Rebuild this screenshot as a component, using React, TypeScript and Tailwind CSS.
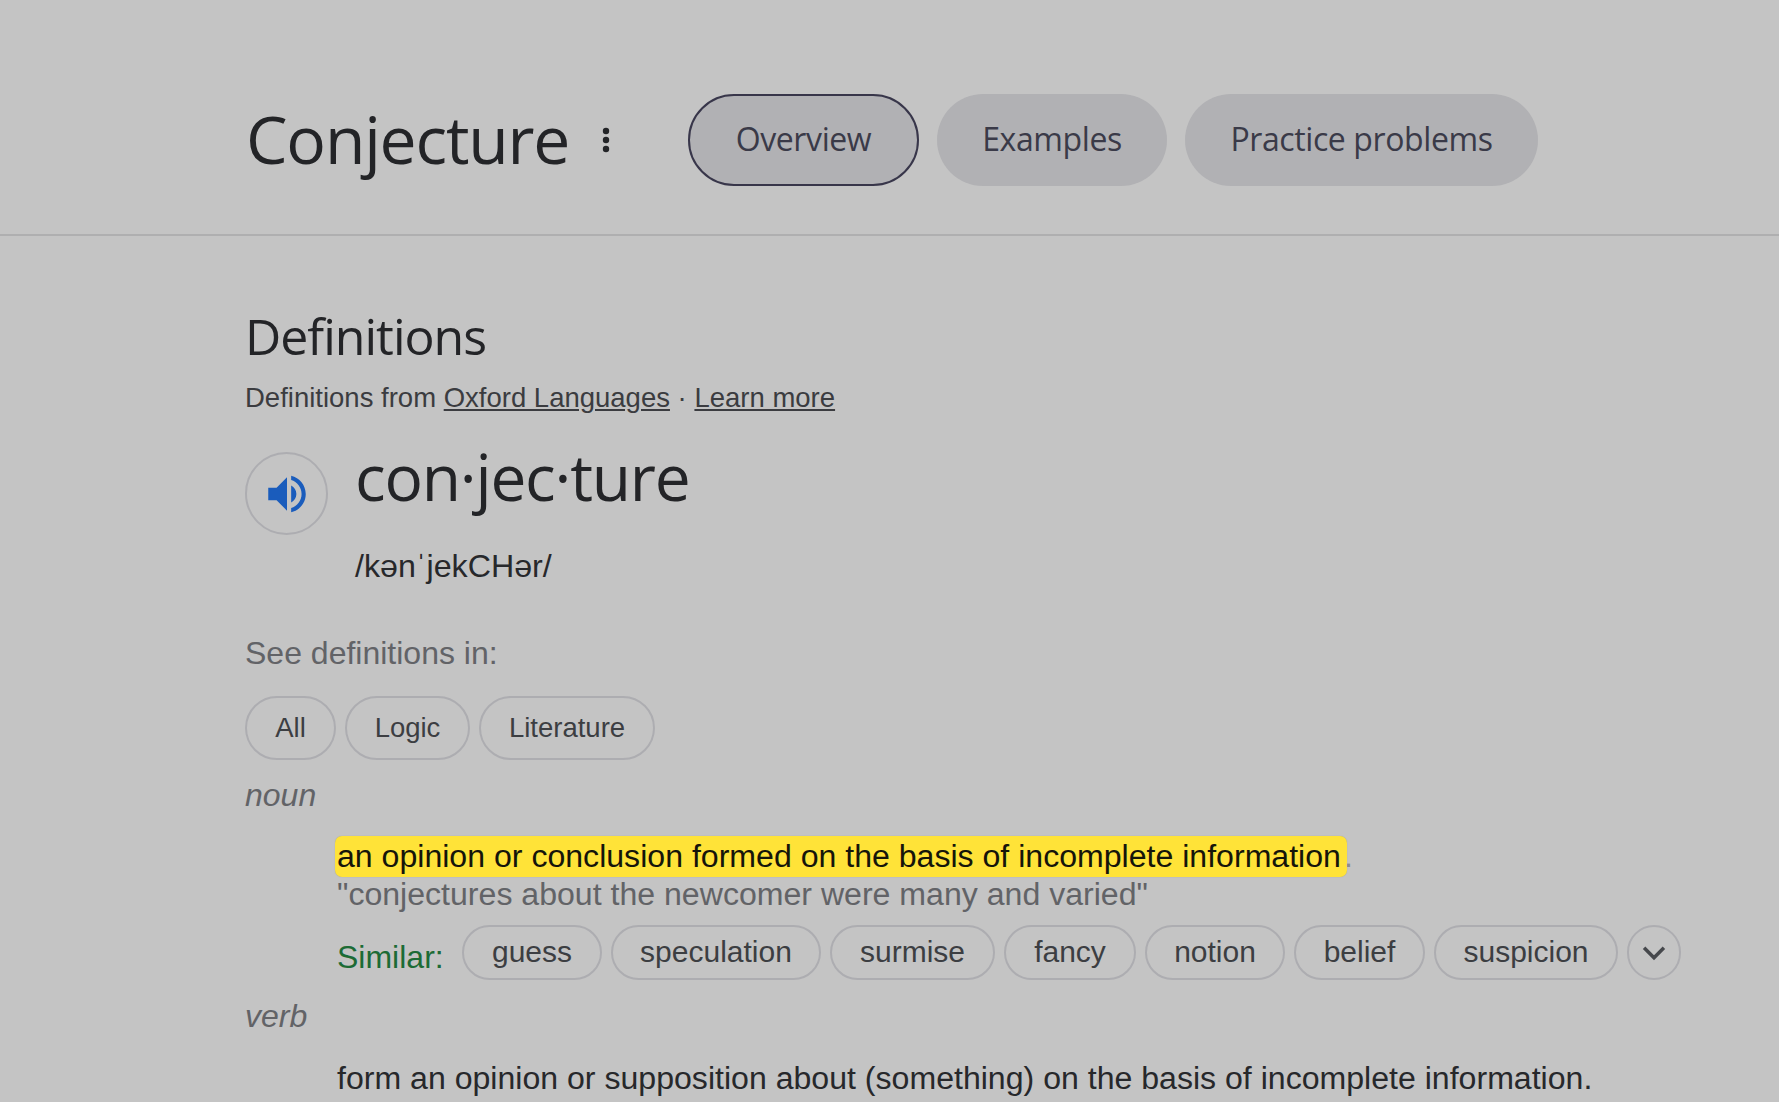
import React from "react";

const chipClass =
  "flex items-center justify-center rounded-full border-2 border-[#adadb1] text-[#3c3e42]";

const similar = [
  { t: "guess", w: "w-[140px]" },
  { t: "speculation", w: "w-[210px]" },
  { t: "surmise", w: "w-[165px]" },
  { t: "fancy", w: "w-[132px]" },
  { t: "notion", w: "w-[140px]" },
  { t: "belief", w: "w-[131px]" },
  { t: "suspicion", w: "w-[184px]" },
];

export default function App() {
  return (
    <div className="h-[1102px] w-[1779px] overflow-hidden bg-[#c4c4c4] font-['Liberation_Sans',Arial,sans-serif] text-[#202124]">
      <header className="flex h-[236px] items-start border-b-2 border-[#afafb0] pl-[246px] pt-[94px]">
        <h1 className="flex h-[92px] w-[321px] items-center whitespace-nowrap pb-[4px] font-['Open_Sans',sans-serif] text-[66px] font-normal tracking-[-1.2px] text-[#232427]">
          Conjecture
        </h1>
        <svg className="ml-[35px] mt-[33px]" width="8" height="26" viewBox="0 0 8 26" fill="#232427">
          <circle cx="4" cy="4" r="3.2" />
          <circle cx="4" cy="13" r="3.2" />
          <circle cx="4" cy="22" r="3.2" />
        </svg>
        <nav className="ml-[78px] flex gap-[18px] font-['Open_Sans',sans-serif] text-[32px] tracking-[-0.4px] text-[#3a3a48]">
          <div className="flex h-[92px] w-[231px] items-center justify-center rounded-full border-2 border-[#38364a] bg-[#b1b1b4] pb-[3px]">
            Overview
          </div>
          <div className="flex h-[92px] w-[230px] items-center justify-center rounded-full bg-[#b1b1b4] pb-[3px]">
            Examples
          </div>
          <div className="flex h-[92px] w-[353px] items-center justify-center rounded-full bg-[#b1b1b4] pb-[3px]">
            Practice problems
          </div>
        </nav>
      </header>

      <main className="pl-[245px]">
        <h2 className="mt-[70px] h-[60px] font-['Open_Sans',sans-serif] text-[50px] font-normal leading-[60px] tracking-[-1px] text-[#232427]">
          Definitions
        </h2>
        <p className="mt-[15px] h-[34px] text-[27.5px] leading-[34px] text-[#3b3c40]">
          Definitions from <span className="underline">Oxford Languages</span> ·{" "}
          <span className="underline">Learn more</span>
        </p>

        <section className="mt-[22px] flex items-start">
          <div className="mt-[15px] flex h-[83px] w-[83px] items-center justify-center rounded-full border-2 border-[#adadb1]">
            <svg width="50" height="50" viewBox="0 0 24 24" fill="#1a5cbc">
              <path d="M3 9v6h4l5 5V4L7 9H3zm13.5 3c0-1.77-1.02-3.29-2.5-4.03v8.05c1.48-.73 2.5-2.25 2.5-4.02zM14 3.23v2.06c2.89.86 5 3.54 5 6.71s-2.11 5.85-5 6.71v2.06c4.01-.91 7-4.49 7-8.77s-2.99-7.86-7-8.77z" />
            </svg>
          </div>
          <div className="ml-[27px]">
            <div className="h-[80px] font-['Open_Sans',sans-serif] text-[64px] leading-[80px] tracking-[-1.2px] text-[#232427]">
              con·jec·ture
            </div>
            <div className="mt-[31px] h-[36px] text-[32.2px] leading-[36px] text-[#27282b]">/kənˈjekCHər/</div>
          </div>
        </section>

        <p className="mt-[50px] h-[38px] text-[32px] leading-[38px] text-[#626367]">See definitions in:</p>

        <div className="mt-[24px] flex gap-[9px] text-[27.5px]">
          <div className={`${chipClass} h-[64px] w-[91px]`}>All</div>
          <div className={`${chipClass} h-[64px] w-[125px]`}>Logic</div>
          <div className={`${chipClass} h-[64px] w-[176px]`}>Literature</div>
        </div>

        <p className="mt-[16px] h-[38px] text-[32px] italic leading-[38px] text-[#626367]">noun</p>

        <div className="ml-[90px] mt-[21px]">
          <p className="flex h-[42px] items-center whitespace-nowrap text-[32.1px] text-[#8a8b8f]">
            <span className="flex h-[41px] w-[1012px] items-center rounded-[7px] bg-[#ffe338] pl-[2px] text-[#15150a] shadow-[0_0_1px_#999]">
              an opinion or conclusion formed on the basis of incomplete information
            </span>
            <span className="-ml-[3px]">.</span>
          </p>
          <p className="h-[34px] whitespace-nowrap pl-[2px] text-[32.1px] leading-[34px] text-[#626367]">
            "conjectures about the newcomer were many and varied"
          </p>
          <div className="mt-[14px] flex items-start pl-[2px]">
            <span className="mt-[11px] h-[42px] w-[125px] text-[32px] leading-[42px] text-[#1c6b35]">Similar:</span>
            <div className="flex gap-[9px] text-[30px]">
              {similar.map((s) => (
                <div key={s.t} className={`${chipClass} h-[55px] pb-[2px] ${s.w}`}>
                  {s.t}
                </div>
              ))}
              <div className={`${chipClass} h-[55px] w-[54px]`}>
                <svg width="28" height="28" viewBox="0 0 24 24" fill="none" stroke="#46484c" strokeWidth="3">
                  <path d="M3.5 7.5 12 16l8.5-8.5" />
                </svg>
              </div>
            </div>
          </div>
        </div>

        <p className="mt-[17px] h-[38px] text-[32px] italic leading-[38px] text-[#626367]">verb</p>

        <p className="ml-[92px] mt-[23px] h-[40px] whitespace-nowrap text-[32.1px] leading-[40px] text-[#27282b]">
          form an opinion or supposition about (something) on the basis of incomplete information.
        </p>
      </main>
    </div>
  );
}
